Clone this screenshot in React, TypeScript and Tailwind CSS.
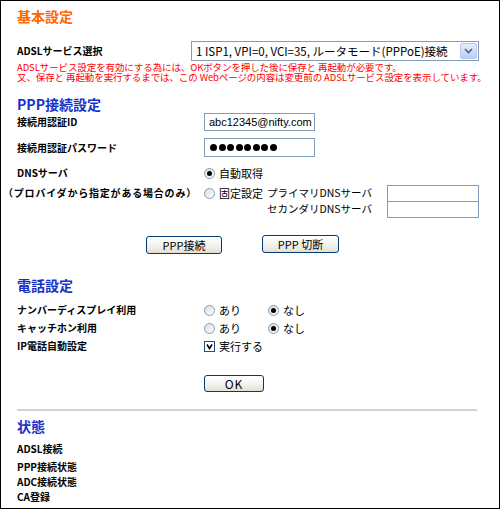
import React from 'react';

const LABEL = 'w-[187px] shrink-0 whitespace-nowrap text-[10px] font-bold leading-none text-black';
const HEAD = 'flex h-[18px] items-center text-[14px] font-bold leading-none text-[#1a32c8]';

function Radio({ checked = false }: { checked?: boolean }) {
  return (
    <span className="flex h-[11px] w-[11px] shrink-0 items-center justify-center rounded-full border border-[#7f9db9] bg-gradient-to-br from-[#dcdcd7] to-white">
      {checked && <span className="h-[5px] w-[5px] rounded-full bg-black" />}
    </span>
  );
}

function Check() {
  return (
    <span className="flex h-[11px] w-[11px] shrink-0 items-center justify-center border border-[#1c5180] bg-white">
      <svg width="7" height="7" viewBox="0 0 7 7">
        <path d="M1 1.5 L3.5 5.5 L6 1.5" fill="none" stroke="#000" strokeWidth="1.6" />
      </svg>
    </span>
  );
}

function XpButton({ children, className = '' }: { children: React.ReactNode; className?: string }) {
  return (
    <button
      className={`flex items-center justify-center rounded-[3px] border border-[#003c74] bg-gradient-to-b from-white via-[#f5f4ee] to-[#e3e0d2] text-[11px] leading-none text-black ${className}`}
    >
      {children}
    </button>
  );
}

function RadioPair({ yes }: { yes: boolean }) {
  return (
    <div className="flex items-center text-[11px] leading-none">
      <div className="flex w-[64px] items-center gap-[4px]">
        <Radio checked={yes} />
        <span>あり</span>
      </div>
      <div className="flex items-center gap-[4px]">
        <Radio checked={!yes} />
        <span>なし</span>
      </div>
    </div>
  );
}

export default function App() {
  return (
    <div
      className="h-[509px] w-[500px] overflow-hidden border border-black bg-white pl-[16px] text-black"
      style={{ fontFamily: '"Noto Sans CJK JP", "Liberation Sans", sans-serif' }}
    >
      {/* 基本設定 */}
      <div className="flex h-[30px] items-center text-[14px] font-bold leading-none text-[#ff6600]">基本設定</div>

      <div className="mt-[10px] flex h-[20px] items-center">
        <span className="w-[174px] shrink-0 whitespace-nowrap text-[10px] font-bold leading-none">ADSLサービス選択</span>
        <div className="flex h-[20px] w-[288px] items-center border border-[#7f9db9] bg-white pl-[4px] pr-[1px]">
          <span className="flex-1 whitespace-nowrap text-[11.5px] leading-[14px]">
            1 ISP1, VPI=0, VCI=35, ルータモード(PPPoE)接続
          </span>
          <span className="flex h-[16px] w-[17px] shrink-0 items-center justify-center rounded-[2px] border border-[#b6c8f0] bg-gradient-to-b from-[#e6eefc] to-[#bccdf5]">
            <svg width="9" height="6" viewBox="0 0 9 6">
              <path d="M1 1 L4.5 4.5 L8 1" fill="none" stroke="#4d6185" strokeWidth="1.6" />
            </svg>
          </span>
        </div>
      </div>

      <div className="mt-[1px] whitespace-nowrap text-[9.5px] leading-[10px] tracking-[-0.1px] text-[#ff0000]">
        <p className="h-[10px]">ADSLサービス設定を有効にする為には、OKボタンを押した後に保存と 再起動が必要です。</p>
        <p className="h-[10px]">又、保存と 再起動を実行するまでは、この Webページの内容は変更前の ADSLサービス設定を表示しています。</p>
      </div>

      {/* PPP接続設定 */}
      <div className={`mt-[13px] ${HEAD}`}>PPP接続設定</div>

      <div className="flex h-[18px] items-center">
        <span className={LABEL}>接続用認証ID</span>
        <div className="flex h-[18px] w-[111px] items-center border border-[#7f9db9] pl-[4px] text-[11px] leading-none" style={{ fontFamily: '"Liberation Sans", sans-serif' }}>
          abc12345@nifty.com
        </div>
      </div>

      <div className="mt-[7px] flex h-[19px] items-center">
        <span className={LABEL}>接続用認証パスワード</span>
        <div className="flex h-[19px] w-[111px] items-center gap-[1.5px] border border-[#7f9db9] pl-[5px]">
          {[0, 1, 2, 3, 4, 5, 6, 7].map(i => (
            <span key={i} className="h-[7px] w-[7px] rounded-full bg-black" />
          ))}
        </div>
      </div>

      <div className="mt-[6px] flex h-[20px] items-center">
        <span className={LABEL}>DNSサーバ</span>
        <div className="flex items-center gap-[4px] text-[11px] leading-none">
          <Radio checked />
          <span>自動取得</span>
        </div>
      </div>

      <div className="mt-[2px] flex">
        <div className="flex h-[16px] w-[187px] shrink-0 items-center justify-end pr-[7px]">
          <span className="whitespace-nowrap text-[10px] font-bold leading-none tracking-[0.8px]">（プロバイダから指定がある場合のみ）</span>
        </div>
        <div className="flex h-[16px] w-[66px] shrink-0 items-center gap-[4px] self-start text-[11px] leading-none">
          <Radio />
          <span>固定設定</span>
        </div>
        <div className="w-[102px] shrink-0 whitespace-nowrap text-[10.5px] leading-none">
          <div className="flex h-[16px] items-center justify-end">プライマリDNSサーバ</div>
          <div className="flex h-[16px] items-center justify-end">セカンダリDNSサーバ</div>
        </div>
        <div className="ml-[15px] w-[92px] shrink-0">
          <div className="h-[17px] border border-[#7f9db9] bg-white" />
          <div className="-mt-[1px] h-[17px] border border-[#7f9db9] bg-white" />
        </div>
      </div>

      <div className="mt-[18px] flex items-start pl-[129px]">
        <XpButton className="h-[18px] w-[76px]">PPP接続</XpButton>
        <XpButton className="ml-[40px] -mt-[1px] h-[18px] w-[77px]">PPP 切断</XpButton>
      </div>

      {/* 電話設定 */}
      <div className={`mt-[22px] ${HEAD}`}>電話設定</div>

      <div className="mt-[7px] flex h-[18px] items-center">
        <span className={LABEL}>ナンバーディスプレイ利用</span>
        <RadioPair yes={false} />
      </div>
      <div className="flex h-[18px] items-center">
        <span className={LABEL}>キャッチホン利用</span>
        <RadioPair yes={false} />
      </div>
      <div className="flex h-[18px] items-center">
        <span className={LABEL}>IP電話自動設定</span>
        <div className="flex items-center gap-[4px] text-[11px] leading-none">
          <Check />
          <span>実行する</span>
        </div>
      </div>

      <div className="mt-[20px] pl-[187px]">
        <XpButton className="h-[17px] w-[60px] text-[12px] tracking-[1px]">OK</XpButton>
      </div>

      <div className="mt-[17px] h-[2px] w-[460px] bg-[#d6d3ce]" />

      {/* 状態 */}
      <div className={`mt-[6px] ${HEAD}`}>状態</div>

      <div className="mt-[4px] text-[10px] font-bold leading-none">
        <div className="flex h-[19px] items-center">ADSL接続</div>
        <div className="flex h-[17px] items-center">PPP接続状態</div>
        <div className="flex h-[14px] items-center">ADC接続状態</div>
        <div className="flex h-[16px] items-center">CA登録</div>
      </div>
    </div>
  );
}
